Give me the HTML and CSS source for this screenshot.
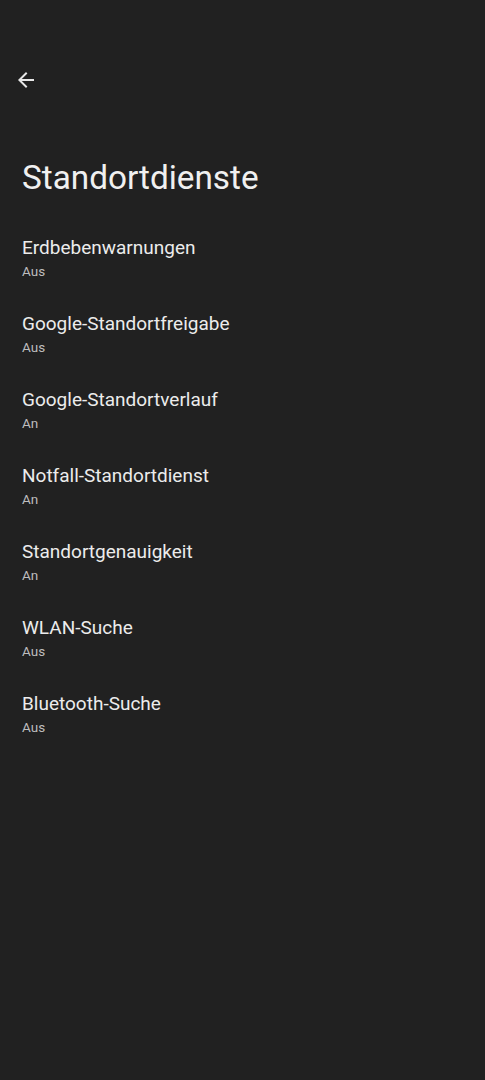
FILE: index.html
```html
<!DOCTYPE html>
<html lang="de">
<head>
    <meta charset="UTF-8">
    <title>Standortdienste</title>
    <link rel="stylesheet" href="styles.css">
</head>
<body>
<div class="page">
    <div class="toolbar">
        <svg class="back" width="24" height="24" viewBox="0 0 24 24">
            <path d="M20 11H7.83l5.59-5.59L12 4l-8 8 8 8 1.41-1.41L7.83 13H20v-2z" fill="#e8e8e8"/>
        </svg>
    </div>
    <h1 class="title">Standortdienste</h1>
    <ul class="list">
        <li><span class="name">Erdbebenwarnungen</span><span class="state">Aus</span></li>
        <li><span class="name">Google-Standortfreigabe</span><span class="state">Aus</span></li>
        <li><span class="name">Google-Standortverlauf</span><span class="state">An</span></li>
        <li><span class="name">Notfall-Standortdienst</span><span class="state">An</span></li>
        <li><span class="name">Standortgenauigkeit</span><span class="state">An</span></li>
        <li><span class="name">WLAN-Suche</span><span class="state">Aus</span></li>
        <li><span class="name">Bluetooth-Suche</span><span class="state">Aus</span></li>
    </ul>
</div>
</body>
</html>
```

FILE: styles.css
```css
body, div, ul, li, h1 {
    margin: 0;
    padding: 0;
}

ul {
    list-style-type: none;
}

html, body {
    background: #212121;
}

body {
    font-family: Roboto, "Noto Sans", sans-serif;
    color: #ececec;
    min-height: 1080px;
}

.toolbar {
    padding: 68px 0 0 14px;
    height: 24px;
}

.back {
    display: block;
}

.title {
    font-weight: 400;
    font-size: 33.3px;
    line-height: 44px;
    margin: 64px 0 0 22px;
    color: #f0f0f0;
}

.list {
    margin-top: 35px;
}

.list li {
    display: flex;
    flex-direction: column;
    padding: 0 22px;
    height: 76px;
}

.name {
    font-size: 19px;
    line-height: 26px;
    color: #ececec;
}

.state {
    font-size: 13.5px;
    line-height: 20px;
    color: #bdbdbd;
}
```
